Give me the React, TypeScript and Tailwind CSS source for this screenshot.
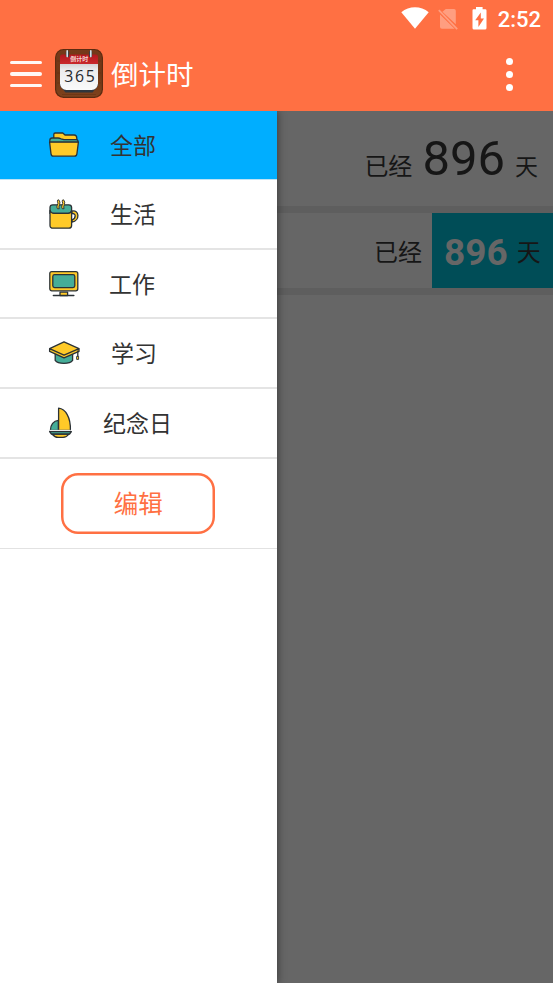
import type { ReactNode } from "react"

const INK = "#2b3236"
const YELLOW = "#ffca28"
const GREEN = "#45ad98"

const Icon = ({ children }: { children: ReactNode }) => (
  <svg
    width="32"
    height="32"
    viewBox="0 0 32 32"
    fill="none"
    stroke={INK}
    strokeWidth="1.3"
    strokeLinejoin="round"
    strokeLinecap="round"
    className="shrink-0"
  >
    {children}
  </svg>
)

const FolderIcon = () => (
  <Icon>
    <path d="M5.8 10V5.4Q5.8 4 7.2 4H14.8L17 6H26.2Q28.6 6 28.8 9V13H5.8Z" fill={YELLOW} />
    <path d="M1.8 13.2V11.2Q2 9 4 9H10Q11.5 9 13 9.8L16 10.6H28.4Q30.2 10.8 30.2 13.2Z" fill={GREEN} />
    <path d="M1.6 13.2H30.4L28.9 24.8Q28.6 27.2 26.4 27.2H5.4Q3.4 27.2 3 24.8Z" fill={YELLOW} />
  </Icon>
)

const MugIcon = () => (
  <Icon>
    <path d="M23.6 13.2C31.5 10.8 32.4 22.6 24 24.2V21.8C28.4 20.4 28.2 14.6 23.6 15.6Z" fill={YELLOW} />
    <path d="M2 15.4V9.6Q2 6.8 4.8 6.8H20.8Q23.6 6.8 23.6 9.6V15.4Z" fill={GREEN} />
    <path d="M2 12.4Q3 15.4 6 15.4H20Q23 15.4 23.6 12.4V27.4Q23.6 30.2 20.8 30.2H5.2Q2 30.2 2 27.4Z" fill={YELLOW} />
    <path d="M9.2 10.4Q8.2 9 9.3 7.2Q10.5 5.5 9.4 3.2Q9.3 1.6 10.8 1.8Q12.7 4 11.6 6.6Q10.5 9 11.1 10.4ZM14 10.4Q13 9 14.1 7.2Q15.3 5.5 14.2 3.2Q14.1 1.6 15.6 1.8Q17.5 4 16.4 6.6Q15.3 9 15.9 10.4Z" fill={YELLOW} strokeWidth="0.9" />
  </Icon>
)

const ComputerIcon = () => (
  <Icon>
    <path d="M12 24.2H19.6V27.6H12Z" fill={YELLOW} />
    <rect x="1.8" y="3.6" width="28" height="19.2" rx="2" fill={YELLOW} />
    <rect x="4.8" y="6.6" width="22" height="13" rx="1.8" fill={GREEN} />
    <path d="M5.4 27.6H25.8" strokeWidth="1.5" />
  </Icon>
)

const CapIcon = () => (
  <Icon>
    <path d="M7.2 15V23.4C10 27.4 21.8 27.4 24.6 23.4V15Z" fill={GREEN} />
    <path d="M1.6 14.4L16 20.8L31 14.4V12.2H1.6Z" fill={YELLOW} />
    <path d="M16 4.8L31 11.6L16 18.2L1.6 11.6Z" fill={YELLOW} />
    <path d="M29.8 14V19.4" />
    <path d="M29 19.4H30.6V22.4H29Z" fill={YELLOW} strokeWidth="0.9" />
  </Icon>
)

const BoatIcon = () => (
  <Icon>
    <path d="M10.4 23.4V13.4C5.6 13.6 2.4 18 2.4 23.4Z" fill={GREEN} />
    <path d="M10.6 23.4V1.2C17.4 2 22.8 10 22.4 23.4Z" fill={YELLOW} />
    <path d="M4 27Q6.8 30.4 10 30.4H15Q18.6 30.4 21 27Z" fill={YELLOW} />
    <path d="M2.4 23.4H22.4" stroke="#fff" strokeWidth="1" />
    <path d="M1.6 24.6H23.4L21.6 27H3.4Z" fill={GREEN} />
  </Icon>
)

const AppLogo = () => (
  <svg width="48" height="49" viewBox="0 0 48 49" className="mb-[2px] ml-[13px]">
    <defs>
      <linearGradient id="wood" x1="0" y1="0" x2="0" y2="1">
        <stop offset="0" stopColor="#75391a" />
        <stop offset="0.5" stopColor="#713715" />
        <stop offset="1" stopColor="#7e421d" />
      </linearGradient>
      <linearGradient id="paper" x1="0" y1="0" x2="0" y2="1">
        <stop offset="0" stopColor="#cfcfd1" />
        <stop offset="0.25" stopColor="#ececee" />
        <stop offset="1" stopColor="#fafafa" />
      </linearGradient>
      <linearGradient id="ribbon" x1="0" y1="0" x2="0" y2="1">
        <stop offset="0" stopColor="#b3181d" />
        <stop offset="1" stopColor="#c9282c" />
      </linearGradient>
    </defs>
    <rect width="48" height="49" rx="8.5" fill="#5c2b10" />
    <rect x="1.2" y="1" width="45.6" height="46.8" rx="7.6" fill="url(#wood)" />
    <path d="M2 12H46M2 24H46M2 34H46M7 45.5H41" stroke="#5f2c0e" strokeWidth="0.7" opacity="0.6" />
    <path d="M5 30V37L10.5 43.6H37.5L43 37V30Z" fill="#30363d" />
    <path d="M5 14H43V34.5Q42.4 40.8 36.5 41H11.5Q5.6 40.8 5 34.5Z" fill="url(#paper)" />
    <path d="M5 15V7.8Q5 5.6 7.4 5.6H40.6Q43 5.6 43 7.8V15Z" fill="url(#ribbon)" />
    <path d="M12.4 2.2V8M35.6 2.2V8" stroke="#35424a" strokeWidth="3" />
    <path d="M12.2 1.8V7.6M35.8 1.8V7.6" stroke="#d7e1e5" strokeWidth="1.6" strokeLinecap="round" />
    <text x="24.2" y="12.4" textAnchor="middle" fill="#f6d5d2" fontSize="6" fontWeight="700" fontFamily="Noto Sans CJK SC, sans-serif">
      倒计时
    </text>
    <text x="9.2" y="33" fill="#24272b" fontSize="15.8" letterSpacing="1.8" fontFamily="Open Sans, sans-serif">
      365
    </text>
  </svg>
)

const StatusBar = () => (
  <div className="flex h-[38px] items-center justify-end pr-3 text-white">
    <svg width="28" height="22" viewBox="0 0 28 22" fill="currentColor" className="mb-[2px]">
      <path d="M0.3 5.2C8-1.4 20-1.4 27.7 5.2L14 21.8Z" />
    </svg>
    <svg width="20" height="22" viewBox="0 0 20 22" className="ml-[9px]">
      <path d="M7.8 1H16Q17.8 1 17.8 2.8V16.2L4.4 3.8ZM2 6.4L16.6 20.8H4Q2 20.8 2 19Z" fill="#ff9e80" />
      <path d="M0.8 2.2L19.2 21.2" stroke="#ff9e80" strokeWidth="1.7" />
    </svg>
    <svg width="15" height="23" viewBox="0 0 15 23" className="mb-px ml-[14px]">
      <path d="M1.5 2.2H4V0H10.6V2.2H13.2Q14.5 2.2 14.5 3.6V21Q14.5 22.6 13 22.6H2Q0.5 22.6 0.5 21V3.6Q0.5 2.2 1.5 2.2Z" fill="currentColor" />
      <path d="M8.8 5.6L3.2 13.2H6.4V20L12 11.6H8.8Z" fill="#ff7043" />
    </svg>
    <span className="mt-[2px] ml-[11px] font-[Roboto,sans-serif] text-[22px] leading-none font-medium">2:52</span>
  </div>
)

const Header = () => (
  <header className="h-[111px] shrink-0 bg-[#ff7043]">
    <StatusBar />
    <div className="flex h-[72px] items-center pl-[10px]">
      <div className="flex w-8 flex-col gap-2">
        <div className="h-[3.5px] rounded-xs bg-white/95" />
        <div className="h-[3.5px] rounded-xs bg-white/95" />
        <div className="h-[3.5px] rounded-xs bg-white/95" />
      </div>
      <AppLogo />
      <h1 className="mb-[2px] ml-2 text-[27.5px] leading-9 text-white">倒计时</h1>
      <div className="mr-10 ml-auto flex flex-col gap-[6px]">
        <div className="size-[7px] rounded-full bg-white" />
        <div className="size-[7px] rounded-full bg-white" />
        <div className="size-[7px] rounded-full bg-white" />
      </div>
    </div>
  </header>
)

const categories = [
  { name: "生活", icon: <MugIcon />, gap: "ml-[30px]" },
  { name: "工作", icon: <ComputerIcon />, gap: "ml-[29px]" },
  { name: "学习", icon: <CapIcon />, gap: "ml-[31px]" },
  { name: "纪念日", icon: <BoatIcon />, gap: "ml-[23px]" },
]

const Drawer = () => (
  <aside className="z-10 w-[276.5px] shrink-0 bg-white text-[23px] text-[#333] shadow-[1px_0_8px_rgba(0,0,0,0.4)]">
    <div className="flex h-[69px] items-center border-b border-[#bfe3f5] bg-[#00aeff] pl-12">
      <FolderIcon />
      <span className="mb-[2px] ml-[30px] leading-8">全部</span>
    </div>
    {categories.map((c) => (
      <div key={c.name} className="flex h-[69.7px] items-center border-b-2 border-[#e4e4e4] pl-12">
        {c.icon}
        <span className={`${c.gap} mb-[2px] leading-8`}>{c.name}</span>
      </div>
    ))}
    <div className="flex h-[90px] justify-center border-b border-[#e2e2e2] pt-[14px]">
      <button className="h-[61px] w-[154px] rounded-[17px] pb-px text-[24.5px] leading-8 text-[#ff7043] shadow-[inset_0_0_0_2.5px_#ff7043]">
        编辑
      </button>
    </div>
  </aside>
)

const Events = () => (
  <main className="flex flex-1 flex-col bg-[#666] text-2xl text-[#161616]">
    <div className="flex h-[95px] items-baseline justify-end pt-3 pr-[15px]">
      <span>已经</span>
      <span className="mx-[10px] font-[Roboto,sans-serif] text-[49px] leading-[72px]">896</span>
      <span className="text-[23px]">天</span>
    </div>
    <div className="h-[7px] bg-[#5e5e5e]" />
    <div className="flex h-[75px] items-center justify-end">
      <span className="mr-[10px] leading-8">已经</span>
      <div className="flex h-full w-[121px] items-center bg-[#004d57] pl-3">
        <span className="mt-1 font-[Roboto,sans-serif] text-[37px] leading-none font-bold text-[#666]">896</span>
        <span className="ml-[9px] leading-8">天</span>
      </div>
    </div>
    <div className="h-[7px] bg-[#5e5e5e]" />
  </main>
)

export default function App() {
  return (
    <div className="flex h-[983px] w-[553px] flex-col overflow-hidden font-['Noto_Sans_CJK_SC',sans-serif]">
      <Header />
      <div className="flex flex-1 overflow-hidden">
        <Drawer />
        <Events />
      </div>
    </div>
  )
}
